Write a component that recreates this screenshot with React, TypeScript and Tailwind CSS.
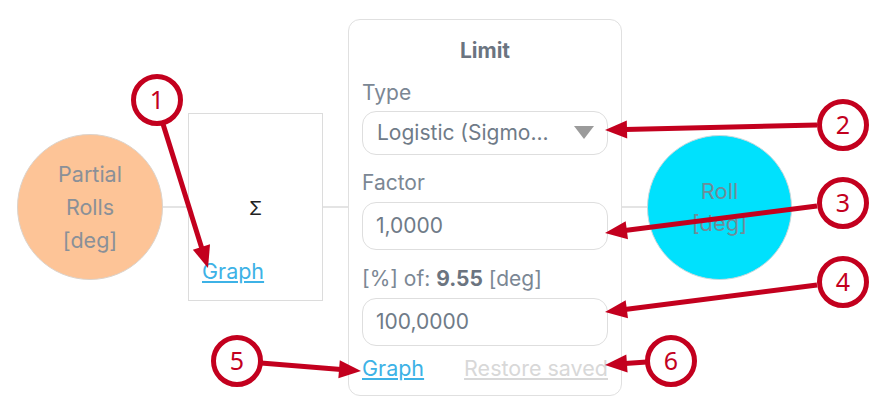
import React from 'react';

const RED = '#c3001e';

type Pt = [number, number];

function Arrow({ from, to }: { from: Pt; to: Pt }) {
  const [x1, y1] = from;
  const [x2, y2] = to;
  const dx = x2 - x1;
  const dy = y2 - y1;
  const len = Math.hypot(dx, dy);
  const ux = dx / len;
  const uy = dy / len;
  const head = 22;
  const half = 9;
  const bx = x2 - ux * head;
  const by = y2 - uy * head;
  const pts = [
    [x2, y2],
    [bx - uy * half, by + ux * half],
    [bx + uy * half, by - ux * half],
  ]
    .map((p) => p.join(','))
    .join(' ');

  return (
    <g>
      <line x1={x1} y1={y1} x2={bx + ux * 2} y2={by + uy * 2} stroke={RED} strokeWidth={5} />
      <polygon points={pts} fill={RED} />
    </g>
  );
}

function Badge({ cx, cy, n }: { cx: number; cy: number; n: number }) {
  return (
    <g>
      <circle cx={cx} cy={cy} r={23.5} fill="white" stroke={RED} strokeWidth={5} />
      <text
        x={cx}
        y={cy + 9}
        textAnchor="middle"
        fontSize={25}
        fill={RED}
        fontFamily="'Noto Sans', sans-serif"
      >
        {n}
      </text>
    </g>
  );
}

function Annotations() {
  return (
    <svg className="pointer-events-none absolute inset-0" width={886} height={414}>
      <Arrow from={[163, 124]} to={[208, 268]} />
      <Arrow from={[817, 125]} to={[605, 130]} />
      <Arrow from={[817, 206]} to={[605, 233]} />
      <Arrow from={[817, 285]} to={[605, 312]} />
      <Arrow from={[261, 363]} to={[361, 371]} />
      <Arrow from={[647, 362]} to={[605, 365]} />
      <Badge cx={157} cy={100} n={1} />
      <Badge cx={843} cy={125} n={2} />
      <Badge cx={843} cy={203} n={3} />
      <Badge cx={843} cy={282} n={4} />
      <Badge cx={237} cy={361} n={5} />
      <Badge cx={671} cy={361} n={6} />
    </svg>
  );
}

function Wire() {
  return <div className="h-[2px] w-[25px] shrink-0 bg-[#e4e4e4]" />;
}

function Field({ value }: { value: string }) {
  return (
    <div className="flex h-[48px] items-center rounded-[14px] border border-[#dedede] px-[13px] text-[21px] text-[#6f7b88]">
      {value}
    </div>
  );
}

export default function App() {
  return (
    <div
      className="relative h-[414px] w-[886px] overflow-hidden bg-white"
      style={{ fontFamily: 'Inter, "Noto Sans", sans-serif' }}
    >
      <div className="flex h-full items-center pl-[17px]">
        <div className="flex h-[146px] w-[146px] shrink-0 flex-col items-center justify-center rounded-full border border-[#dcd3cb] bg-[#fdc497] text-[21.5px] leading-[33px] text-[#8a9098]">
          <span>Partial</span>
          <span>Rolls</span>
          <span>[deg]</span>
        </div>
        <Wire />
        <div className="flex h-[188px] w-[135px] shrink-0 flex-col border border-[#dcdcdc] px-[13px] pb-[17px]">
          <div className="flex flex-1 items-center justify-center pt-[46px] text-[19px] text-[#222]">Σ</div>
          <a className="text-[21.5px] leading-[24px] text-[#3db2e6] underline underline-offset-2">Graph</a>
        </div>
        <Wire />
        <div className="flex h-[377px] w-[274px] shrink-0 flex-col rounded-[12px] border border-[#e0e0e0] px-[13px] pt-[18px]">
          <div className="text-center text-[21px] font-bold leading-[26px] text-[#6b7480]">Limit</div>
          <div className="mt-[16px] text-[21px] leading-[26px] text-[#7b8794]">Type</div>
          <div className="mt-[5px] flex h-[44px] items-center justify-between rounded-[14px] border border-[#dedede] pl-[14px] pr-[13px] text-[21px] text-[#6f7b88]">
            <span>Logistic (Sigmo...</span>
            <svg width="20" height="13" viewBox="0 0 20 13">
              <polygon points="0,0 20,0 10,13" fill="#9b9b9b" />
            </svg>
          </div>
          <div className="mt-[15px] text-[21px] leading-[26px] text-[#7b8794]">Factor</div>
          <div className="mt-[6px]">
            <Field value="1,0000" />
          </div>
          <div className="mt-[16px] text-[21px] leading-[26px] text-[#7b8794]">
            [%] of: <b className="text-[#6b7480]">9.55</b> [deg]
          </div>
          <div className="mt-[6px]">
            <Field value="100,0000" />
          </div>
          <div className="mt-[9px] flex items-center justify-between text-[21.5px] leading-[26px]">
            <a className="text-[#3db2e6] underline underline-offset-2">Graph</a>
            <a className="text-[#d8d8d8] underline underline-offset-2">Restore saved</a>
          </div>
        </div>
        <Wire />
        <div className="flex h-[145px] w-[145px] shrink-0 flex-col items-center justify-center rounded-full border border-[#c8d8dc] bg-[#00e1fd] text-[22px] leading-[32px] text-[#6f8c98]">
          <span>Roll</span>
          <span>[deg]</span>
        </div>
      </div>
      <Annotations />
    </div>
  );
}
